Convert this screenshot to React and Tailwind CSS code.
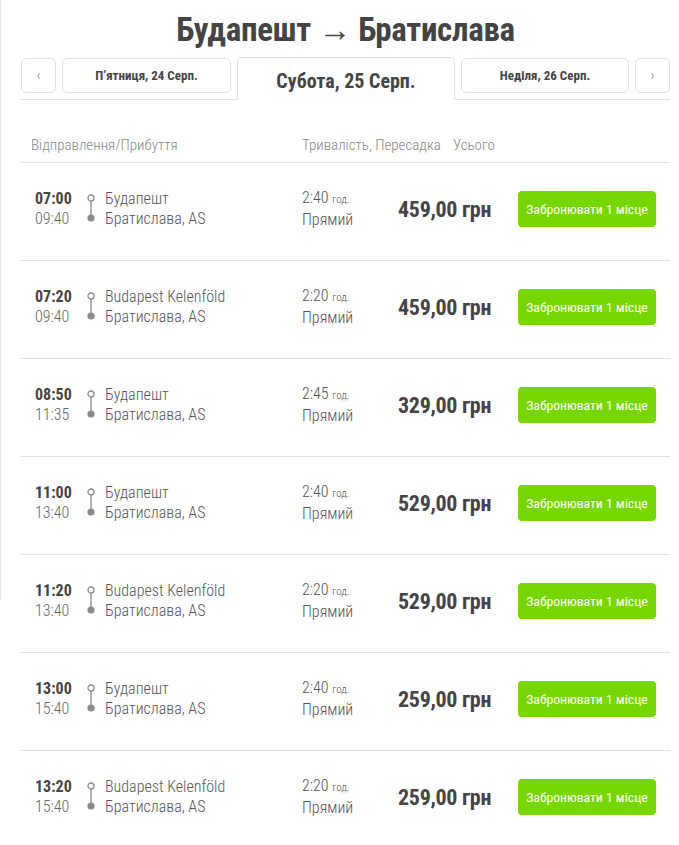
import React from "react";

const trips = [
  { dep: "07:00", arr: "09:40", from: "Будапешт", dur: "2:40", price: "459,00" },
  { dep: "07:20", arr: "09:40", from: "Budapest Kelenföld", dur: "2:20", price: "459,00" },
  { dep: "08:50", arr: "11:35", from: "Будапешт", dur: "2:45", price: "329,00" },
  { dep: "11:00", arr: "13:40", from: "Будапешт", dur: "2:40", price: "529,00" },
  { dep: "11:20", arr: "13:40", from: "Budapest Kelenföld", dur: "2:20", price: "529,00" },
  { dep: "13:00", arr: "15:40", from: "Будапешт", dur: "2:40", price: "259,00" },
  { dep: "13:20", arr: "15:40", from: "Budapest Kelenföld", dur: "2:20", price: "259,00" },
];

function RouteIcon() {
  return (
    <svg width="10" height="30" viewBox="0 0 10 30" className="shrink-0">
      <circle cx="5" cy="4" r="3" fill="white" stroke="#8a8a8a" strokeWidth="1.3" />
      <line x1="5" y1="7" x2="5" y2="24" stroke="#8a8a8a" strokeWidth="1.3" />
      <circle cx="5" cy="24" r="3.6" fill="#8a8a8a" />
    </svg>
  );
}

function TripRow({ trip }) {
  return (
    <div className="flex items-center h-[98px] pb-[5px] border-b border-[#e2e2e2]">
      <div className="w-[65px] pl-[14px] text-[16px] leading-[20px]">
        <div className="font-bold text-[#444]">{trip.dep}</div>
        <div className="font-light text-[#666]">{trip.arr}</div>
      </div>
      <RouteIcon />
      <div className="ml-[9px] w-[197px] text-[16px] leading-[20px] font-light text-[#555]">
        <div>{trip.from}</div>
        <div>Братислава, AS</div>
      </div>
      <div className="w-[96px] text-[16px] leading-[20px] font-light text-[#555]">
        <div>
          {trip.dur} <span className="text-[11px]">год.</span>
        </div>
        <div>Прямий</div>
      </div>
      <div className="w-[120px] text-[22px] font-bold text-[#444] tracking-[-0.3px]">
        {trip.price} грн
      </div>
      <button className="bg-[#77d800] text-white text-[13.7px] rounded-[4px] w-[138px] h-[36px] font-normal">
        Забронювати 1 місце
      </button>
    </div>
  );
}

export default function App() {
  return (
    <div
      className="bg-white min-h-[845px] border-l border-[#e6e6e6] relative"
      style={{ fontFamily: '"Roboto Condensed", Roboto, "Liberation Sans", sans-serif' }}
    >
      <div className="absolute left-0 top-[600px] bottom-0 w-[2px] bg-white -ml-px" />
      <div className="w-[649px] ml-[20px] pt-[10px]">
        <h1 className="text-center text-[33px] font-bold text-[#444] leading-[40px] tracking-[-0.3px]">
          Будапешт → Братислава
        </h1>
        <div className="flex items-end mt-[8px] border-b border-[#e2e2e2] h-[42px] gap-[6px]">
          <button className="w-[35px] h-[35px] mb-[6px] border border-[#e2e2e2] rounded-[5px] text-[#999] text-[14px]">
            ‹
          </button>
          <button className="w-[169px] h-[35px] mb-[6px] border border-[#e2e2e2] rounded-[5px] text-[13px] font-bold text-[#444]">
            П’ятниця, 24 Серп.
          </button>
          <div className="w-[218px] h-[43px] -mb-px pt-[3px] border border-b-0 border-[#e2e2e2] rounded-t-[5px] bg-white flex items-center justify-center text-[20px] font-bold text-[#444]">
            Субота, 25 Серп.
          </div>
          <button className="w-[168px] h-[35px] mb-[6px] border border-[#e2e2e2] rounded-[5px] text-[13px] font-bold text-[#444]">
            Неділя, 26 Серп.
          </button>
          <button className="w-[35px] h-[35px] mb-[6px] border border-[#e2e2e2] rounded-[5px] text-[#999] text-[14px]">
            ›
          </button>
        </div>
        <div className="flex items-center h-[63px] border-b border-[#e2e2e2] pt-[28px] text-[15px] font-light text-[#888]">
          <div className="w-[281px] pl-[10px]">Відправлення/Прибуття</div>
          <div className="w-[151px]">Тривалість, Пересадка</div>
          <div>Усього</div>
        </div>
        {trips.map((t, i) => (
          <TripRow key={i} trip={t} />
        ))}
      </div>
    </div>
  );
}
